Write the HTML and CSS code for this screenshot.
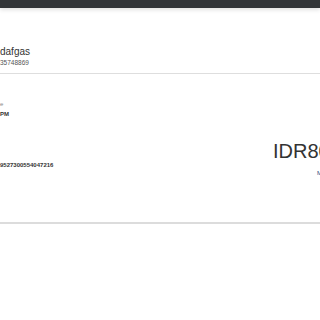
FILE: index.html
```
<!DOCTYPE html>
<html lang="en">
<head>
  <meta charset="UTF-8">
  <meta name="viewport" content="width=device-width, initial-scale=1.0">
  <title>Order Detail</title>
  <link rel="stylesheet" href="styles.css">
</head>
<body>
  <div class="topbar"></div>

  <div class="customer">
    <div class="customer-name">dafgas</div>
    <div class="customer-phone">35748869</div>
  </div>

  <div class="order">
    <div class="order-info">
      <div class="label">e</div>
      <div class="value">PM</div>
      <div class="value invoice">9527300554047216</div>
    </div>
    <div class="order-total">
      <div class="price">IDR80.000</div>
      <a href="#" class="status">Menunggu</a>
    </div>
  </div>
</body>
</html>
```

FILE: styles.css
```
* {
  margin: 0;
  padding: 0;
  box-sizing: border-box;
}
body {
  font-family: 'Liberation Sans', Arial, sans-serif;
  background: #fff;
  color: #333;
  overflow: hidden;
  width: 320px;
  height: 320px;
}
.topbar {
  height: 8px;
  background: #323538;
  box-shadow: 0 2px 4px rgba(0,0,0,0.12);
}
.customer {
  padding: 38px 0 6px;
  border-bottom: 1px solid #dedede;
}
.customer-name {
  font-size: 10px;
  line-height: 12px;
  color: #333;
}
.customer-phone {
  margin-top: 1px;
  font-size: 6.5px;
  line-height: 8px;
  color: #555;
}
.order {
  display: flex;
  padding: 26px 0 45px;
  border-bottom: 2px solid #dcdcdc;
}
.order-info {
  width: 273px;
  flex-shrink: 0;
}
.label {
  font-size: 6px;
  line-height: 8px;
  color: #888;
}
.value {
  margin-top: 2px;
  font-size: 6px;
  line-height: 8px;
  font-weight: bold;
  color: #333;
}
.invoice {
  margin-top: 43px;
}
.order-total {
  padding-top: 39px;
  white-space: nowrap;
}
.price {
  font-size: 20px;
  line-height: 24px;
  color: #333;
}
.status {
  display: block;
  margin-top: 6px;
  padding-left: 44px;
  font-size: 6px;
  line-height: 8px;
  color: #2a3f7c;
  text-decoration: none;
}
```
